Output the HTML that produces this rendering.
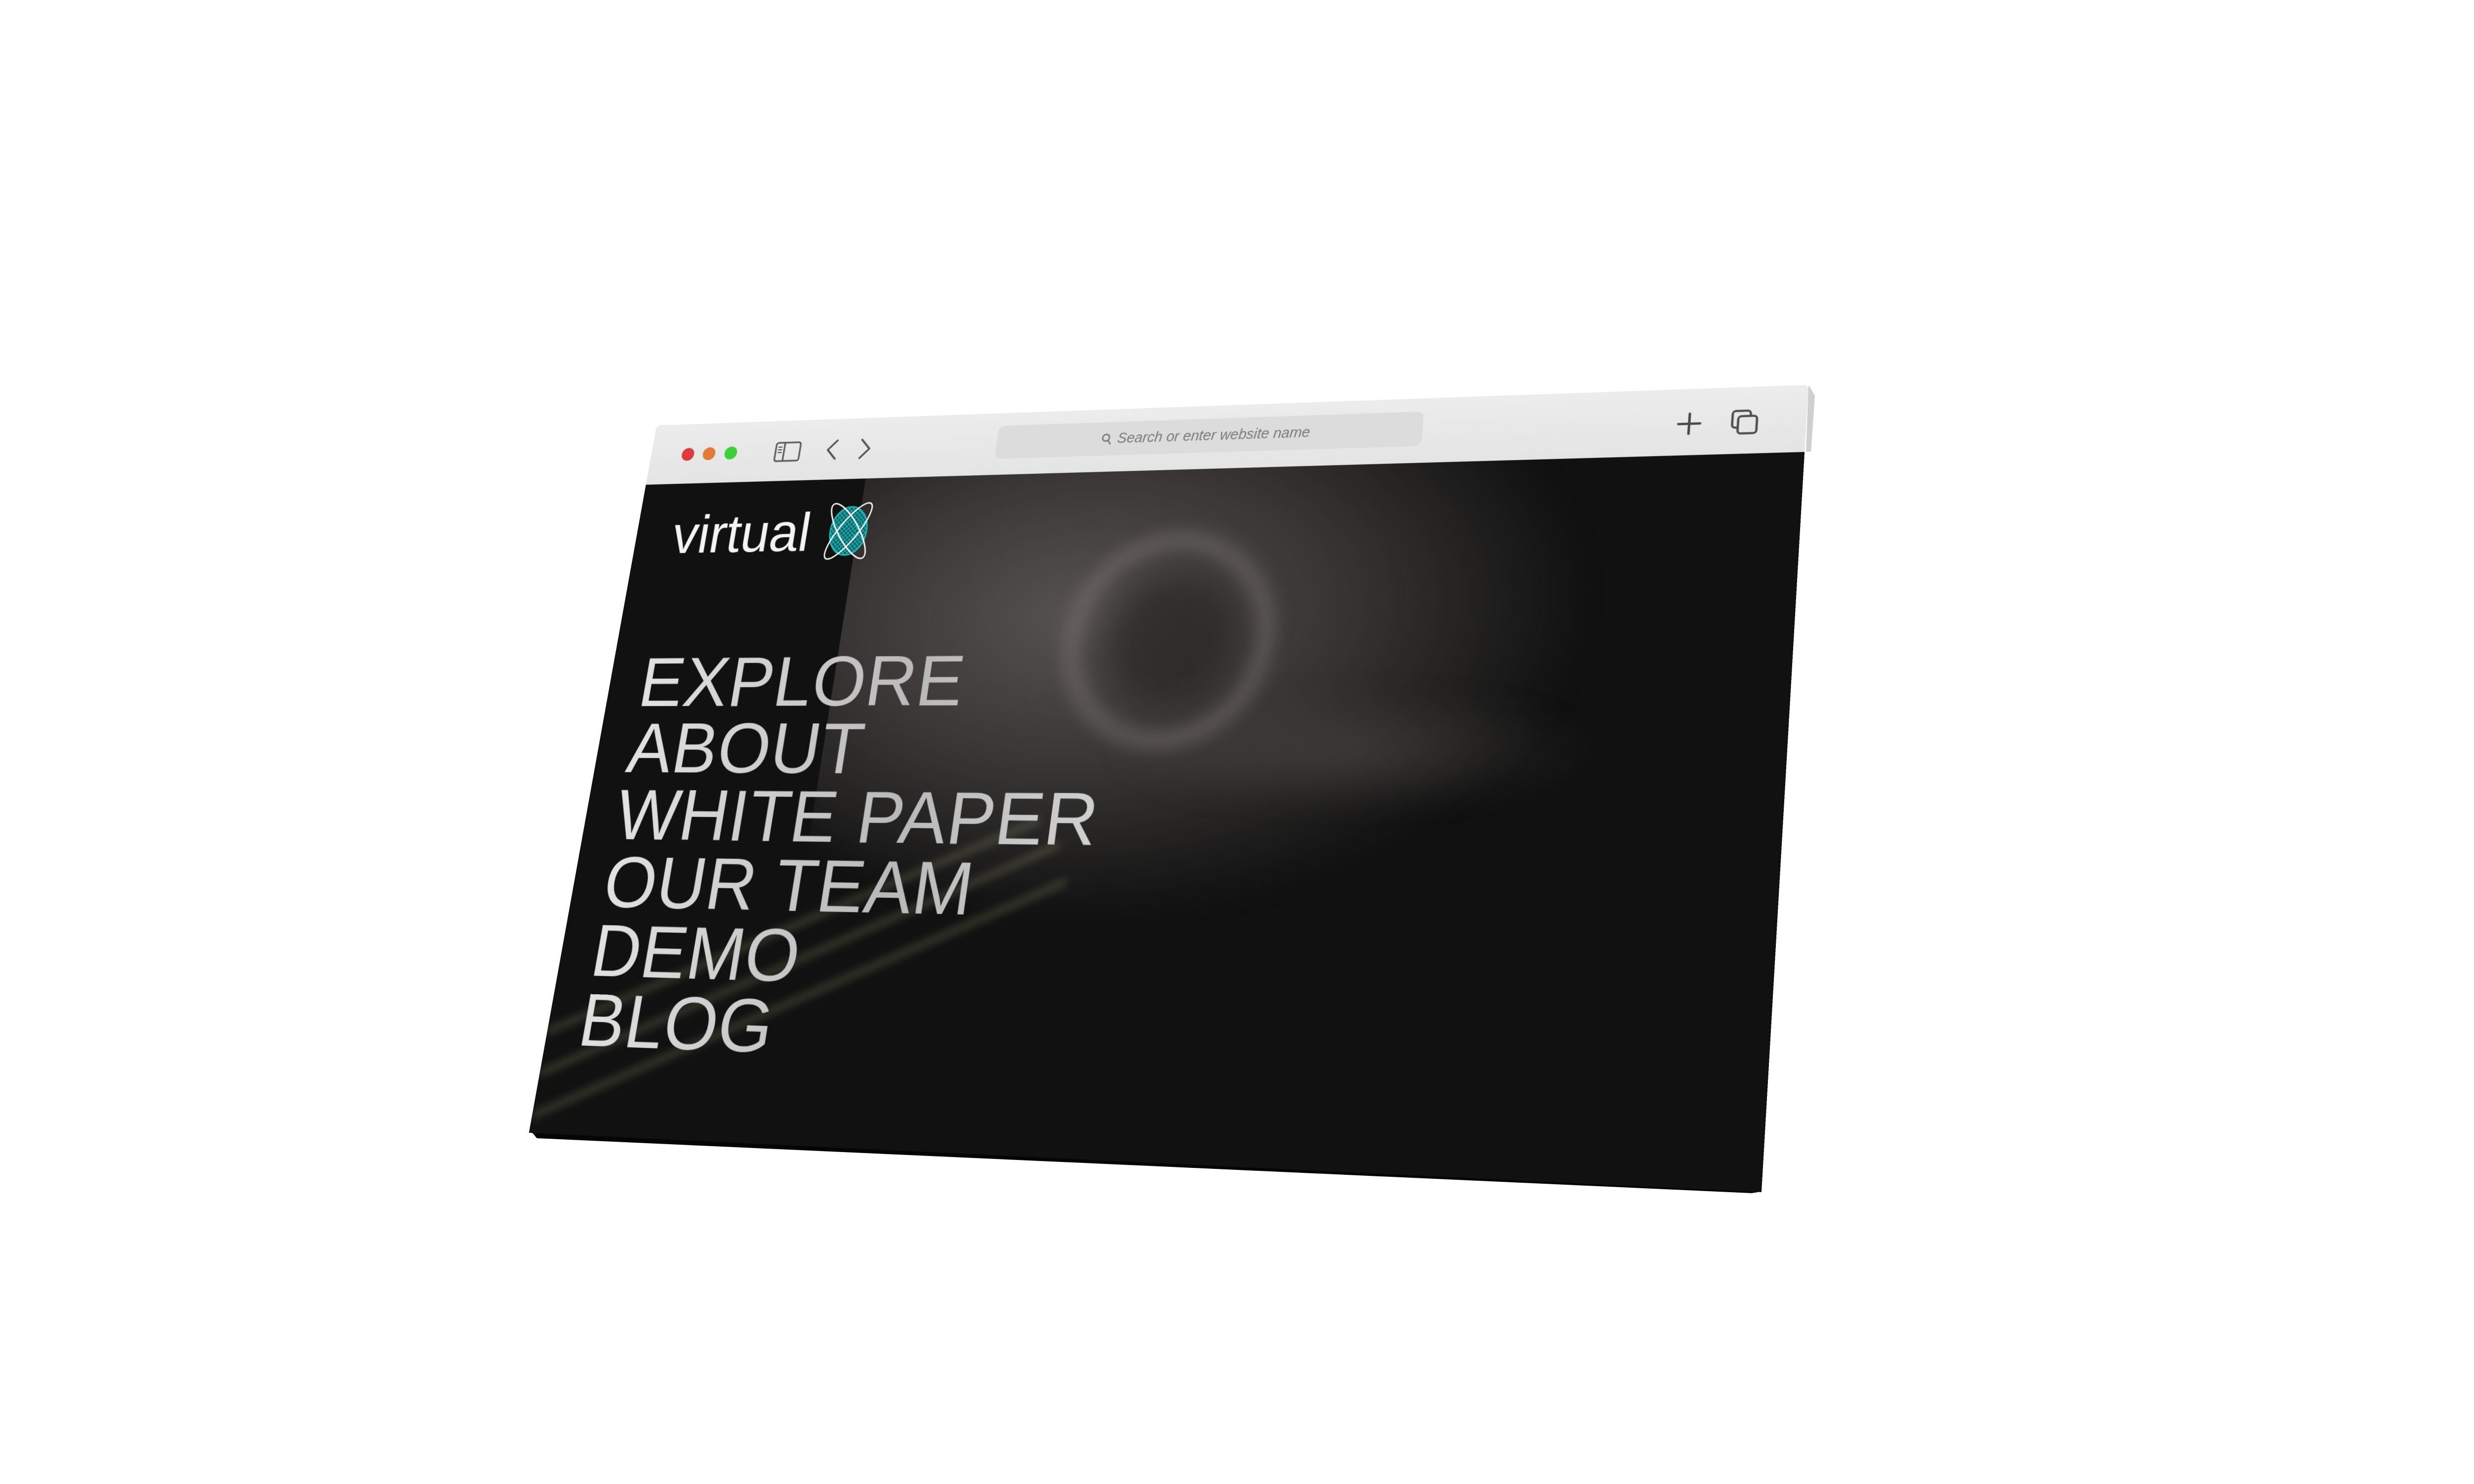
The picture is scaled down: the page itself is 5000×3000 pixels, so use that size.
<!DOCTYPE html>
<html><head><meta charset="utf-8"><style>
html,body{margin:0;padding:0;width:5000px;height:3000px;background:#fff;overflow:hidden}
#slab{position:absolute;left:0;top:0}
#b{position:absolute;left:0;top:0;width:2000px;height:1250px;transform-origin:0 0;
transform:matrix3d(0.947205,-0.087145,0,-0.000059315,-0.266232,1.015832,0,-0.000055968,0,0,1,0,1327,860,0,1);
font-family:"Liberation Sans",sans-serif;}
#tb{position:absolute;left:0;top:0;width:2000px;height:112px;background:linear-gradient(#ececec,#e4e4e4);border-radius:8px 8px 0 0}
.dot{position:absolute;top:45px;width:24px;height:24px;border-radius:50%}
#addr{position:absolute;left:652px;top:23px;width:738px;height:60px;border-radius:12px;background:#dcdcdc;color:#7a7a7a;font-size:25px;line-height:60px;text-align:center;font-style:italic}
#ct{position:absolute;left:0;top:112px;width:2000px;height:1138px;background:#111;overflow:hidden}
.blob{position:absolute;border-radius:50%}
#menu{position:absolute;left:58px;top:417px;font-size:125px;line-height:117px;letter-spacing:1px;
background:linear-gradient(90deg,#e2e2e2,#b9b9b9 60%,#d0d0d0);-webkit-background-clip:text;background-clip:text;color:transparent}
#logo{position:absolute;left:71px;top:158px;font-size:98px;line-height:98px;color:#f4f4f4}
</style></head><body>
<svg id="slab" width="5000" height="3000"><polygon points="1070,2283 3553,2398 3553,2410 3540,2412 1085,2301" fill="#050505"/><polygon points="3655,778 3668,800 3660,913 3650,913" fill="#cfcfcf"/></svg>
<div id="b">
 <div id="ct">
  <div style="position:absolute;left:420px;top:0;width:1300px;height:760px;overflow:hidden">
   <div class="blob" style="left:-250px;top:-250px;width:1500px;height:1000px;background:radial-gradient(ellipse at 45% 50%,rgba(100,95,93,.85),rgba(78,74,72,.6) 40%,rgba(17,17,17,0) 72%);filter:blur(25px)"></div>
   <div class="blob" style="left:500px;top:380px;width:800px;height:200px;background:radial-gradient(ellipse,rgba(75,71,69,.6),rgba(17,17,17,0) 70%);filter:blur(20px)"></div>
  </div>
  <div class="blob" style="left:820px;top:110px;width:360px;height:370px;border:30px solid rgba(130,125,123,.45);box-sizing:border-box;filter:blur(14px)"></div>
  <div class="blob" style="left:890px;top:180px;width:230px;height:230px;background:rgba(28,26,26,.55);filter:blur(30px)"></div>
  <svg style="position:absolute;left:0;top:0" width="2000" height="1138">
   <defs><filter id="bl"><feGaussianBlur stdDeviation="7"/></filter></defs>
   <g filter="url(#bl)" stroke="rgba(150,150,110,.3)" stroke-width="12">
    <line x1="0" y1="1040" x2="860" y2="640"/>
    <line x1="0" y1="970" x2="820" y2="600"/>
    <line x1="0" y1="1110" x2="880" y2="700"/>
   </g>
  </svg>
 </div>
 <div id="tb">
  <div class="dot" style="left:60px;background:#dc3b3f"></div>
  <div class="dot" style="left:101px;background:#e07b3a"></div>
  <div class="dot" style="left:143px;background:#3ccf3a"></div>
  <svg style="position:absolute;left:239px;top:39px" width="50" height="38" viewBox="0 0 50 38" fill="none" stroke="#555" stroke-width="3"><rect x="2" y="2" width="46" height="34" rx="4"/><line x1="18" y1="2" x2="18" y2="36"/><line x1="6" y1="10" x2="14" y2="10" stroke-width="2"/><line x1="6" y1="15" x2="14" y2="15" stroke-width="2"/><line x1="6" y1="20" x2="14" y2="20" stroke-width="2"/></svg>
  <svg style="position:absolute;left:336px;top:38px" width="24" height="38" viewBox="0 0 24 38" fill="none" stroke="#555" stroke-width="3.5" stroke-linecap="round" stroke-linejoin="round"><polyline points="20,2 4,19 20,36"/></svg>
  <svg style="position:absolute;left:398px;top:38px" width="24" height="38" viewBox="0 0 24 38" fill="none" stroke="#555" stroke-width="3.5" stroke-linecap="round" stroke-linejoin="round"><polyline points="4,2 20,19 4,36"/></svg>
  <div id="addr"><svg width="20" height="22" viewBox="0 0 20 22" style="vertical-align:-4px;margin-right:8px" fill="none" stroke="#7a7a7a" stroke-width="2.5"><circle cx="8" cy="8" r="6"/><line x1="12" y1="13" x2="17" y2="20"/></svg>Search or enter website name</div>
  <svg style="position:absolute;left:1799px;top:39px" width="40" height="40" viewBox="0 0 40 40" stroke="#4a4a4a" stroke-width="4" stroke-linecap="round"><line x1="20" y1="3" x2="20" y2="37"/><line x1="3" y1="20" x2="37" y2="20"/></svg>
  <svg style="position:absolute;left:1883px;top:37px" width="44" height="44" viewBox="0 0 44 44" fill="none" stroke="#4a4a4a" stroke-width="3.5"><rect x="3" y="3" width="28" height="28" rx="5"/><rect x="12" y="12" width="29" height="29" rx="5" fill="#e6e6e6"/></svg>
 </div>
 <div id="logo">virtual</div>
 <svg style="position:absolute;left:347px;top:155px" width="112" height="104" viewBox="0 0 112 104">
  <defs><pattern id="m" width="8" height="8" patternUnits="userSpaceOnUse"><path d="M0 0L8 8M8 0L0 8" stroke="#22b5b8" stroke-width="1.3"/></pattern></defs>
  <ellipse cx="56" cy="52" rx="34" ry="44" fill="#0e5f63"/>
  <ellipse cx="56" cy="52" rx="34" ry="44" fill="url(#m)" stroke="#2cc4c6" stroke-width="2"/>
  <ellipse cx="56" cy="52" rx="18" ry="60" transform="rotate(-35 56 52)" fill="none" stroke="#fff" stroke-width="2.5"/>
  <ellipse cx="56" cy="52" rx="18" ry="60" transform="rotate(35 56 52)" fill="none" stroke="#fff" stroke-width="2.5"/>
 </svg>
 <div id="menu">EXPLORE<br>ABOUT<br>WHITE PAPER<br>OUR TEAM<br>DEMO<br>BLOG</div>
</div>
</body></html>
